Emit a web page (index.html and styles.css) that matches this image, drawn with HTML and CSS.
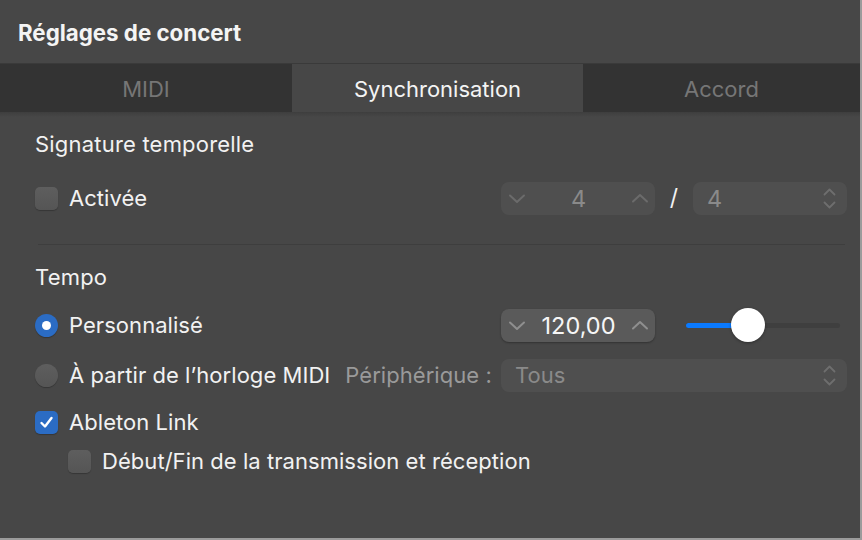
FILE: index.html
```html
<!DOCTYPE html>
<html lang="fr">
<head>
<meta charset="utf-8">
<title>Réglages de concert</title>
<link rel="stylesheet" href="styles.css">
</head>
<body>
<div class="window">
  <header class="header">
    <h1 class="title">Réglages de concert</h1>
  </header>
  <nav class="tabs">
    <div class="tab tab-midi">MIDI</div>
    <div class="tab tab-sync active">Synchronisation</div>
    <div class="tab tab-accord">Accord</div>
  </nav>
  <main class="content">
    <h2 class="section-title first">Signature temporelle</h2>
    <div class="row row-sig">
      <label class="check-label">
        <span class="checkbox"></span>
        <span class="label">Activée</span>
      </label>
      <div class="controls">
        <div class="stepper disabled">
          <svg class="chev" width="18" height="11" viewBox="0 0 18 11"><polyline points="2,2.5 9,9 16,2.5"/></svg>
          <span class="stepper-value">4</span>
          <svg class="chev" width="18" height="11" viewBox="0 0 18 11"><polyline points="2,8.5 9,2 16,8.5"/></svg>
        </div>
        <span class="slash">/</span>
        <div class="popup small disabled">
          <span class="popup-value">4</span>
          <svg class="updown" width="13" height="21" viewBox="0 0 13 21"><polyline points="1.5,6.5 6.5,1.5 11.5,6.5"/><polyline points="1.5,14.5 6.5,19.5 11.5,14.5"/></svg>
        </div>
      </div>
    </div>
    <div class="separator"></div>
    <h2 class="section-title tempo">Tempo</h2>
    <div class="row row-custom">
      <label class="check-label">
        <span class="radio on"></span>
        <span class="label">Personnalisé</span>
      </label>
      <div class="controls">
        <div class="stepper enabled">
          <svg class="chev" width="18" height="11" viewBox="0 0 18 11"><polyline points="2,2.5 9,9 16,2.5"/></svg>
          <span class="stepper-value">120,00</span>
          <svg class="chev" width="18" height="11" viewBox="0 0 18 11"><polyline points="2,8.5 9,2 16,8.5"/></svg>
        </div>
        <div class="slider">
          <div class="slider-track"><div class="slider-fill" style="width: 62px"></div></div>
          <div class="slider-thumb" style="left: 45px"></div>
        </div>
      </div>
    </div>
    <div class="row row-midi">
      <label class="check-label">
        <span class="radio"></span>
        <span class="label">À partir de l’horloge MIDI</span>
      </label>
      <span class="device-label">Périphérique :</span>
      <div class="popup wide disabled">
        <span class="popup-value">Tous</span>
        <svg class="updown" width="13" height="21" viewBox="0 0 13 21"><polyline points="1.5,6.5 6.5,1.5 11.5,6.5"/><polyline points="1.5,14.5 6.5,19.5 11.5,14.5"/></svg>
      </div>
    </div>
    <div class="row row-link">
      <label class="check-label">
        <span class="checkbox on">
          <svg width="17" height="17" viewBox="0 0 17 17"><polyline points="3.5,9 7,12.5 13.5,4"/></svg>
        </span>
        <span class="label">Ableton Link</span>
      </label>
    </div>
    <div class="row row-sub">
      <label class="check-label">
        <span class="checkbox"></span>
        <span class="label">Début/Fin de la transmission et réception</span>
      </label>
    </div>
  </main>
</div>
</body>
</html>
```

FILE: styles.css
```css
* { box-sizing: border-box; }
html, body { margin: 0; padding: 0; background: #474747; }
body {
  font-family: "Inter", "Liberation Sans", sans-serif;
  color: #f2f2f2;
  -webkit-font-smoothing: antialiased;
}
.window {
  width: 862px;
  height: 540px;
  background: #474747;
  border-right: 2px solid #9b9b9b;
  border-bottom: 2px solid #9b9b9b;
  position: relative;
  overflow: hidden;
}
.header {
  height: 64px;
  display: flex;
  align-items: center;
  padding-left: 18px;
  padding-top: 0;
}
.title {
  margin: 0;
  font-size: 22.3px;
  font-weight: 700;
  letter-spacing: 0;
  color: #f4f4f4;
}
.tabs {
  display: flex;
  height: 48px;
  background: #333333;
  box-shadow: 0 -1px 0 #3a3a3a;
}
.tab {
  display: flex;
  align-items: center;
  justify-content: center;
  font-size: 22px;
  color: #767676;
  padding-top: 1px;
}
.tab-midi { width: 292px; }
.tab-sync { width: 291px; }
.tab-accord { flex: 1; }
.tab.active { background: #474747; color: #f4f4f4; }
.content {
  padding: 20px 0 0 35px;
  background: linear-gradient(#3e3e3e, #474747 5px);
  height: 428px;
}
.section-title {
  margin: 0;
  font-size: 22px;
  font-weight: 400;
  line-height: 24px;
  letter-spacing: 0.2px;
  color: #f2f2f2;
}
.tempo { margin-top: 20px; }
.row {
  display: flex;
  align-items: center;
  height: 40px;
}
.row-sig { margin-top: 22px; }
.row-custom { margin-top: 16px; }
.row-midi { margin-top: 10px; }
.row-link { margin-top: 7px; }
.row-sub { margin-top: -1px; padding-left: 33px; }
.check-label {
  display: flex;
  align-items: center;
  gap: 11px;
}
.label { font-size: 22px; line-height: 24px; letter-spacing: 0.05px; }
.checkbox {
  width: 23px;
  height: 23px;
  border-radius: 5px;
  background: linear-gradient(#5e5e5e, #555555);
  box-shadow: 0 1px 1px rgba(0,0,0,0.25);
  display: flex;
  align-items: center;
  justify-content: center;
}
.checkbox.on { background: #2b6cc4; }
.checkbox svg polyline {
  fill: none;
  stroke: #ffffff;
  stroke-width: 2.4;
  stroke-linecap: round;
  stroke-linejoin: round;
}
.radio {
  width: 23px;
  height: 23px;
  border-radius: 50%;
  background: linear-gradient(#5e5e5e, #555555);
  box-shadow: 0 1px 1px rgba(0,0,0,0.25);
  display: flex;
  align-items: center;
  justify-content: center;
}
.radio.on { background: #2b6cc4; }
.radio.on::after {
  content: "";
  width: 9px;
  height: 9px;
  border-radius: 50%;
  background: #ffffff;
}
.controls {
  margin-left: auto;
  display: flex;
  align-items: center;
  width: 346px;
  margin-right: 13px;
}
.stepper {
  width: 154px;
  height: 33px;
  border-radius: 8px;
  display: flex;
  align-items: center;
  justify-content: space-between;
  padding: 0 6px 0 7px;
}
.stepper.disabled { background: #4f4f4f; }
.stepper.enabled {
  background: #5a5a5a;
  box-shadow: 0 1px 2px rgba(0,0,0,0.3);
}
.stepper-value { font-size: 23.5px; }
.stepper.disabled .stepper-value { color: #8a8a8a; }
.stepper.enabled .stepper-value { color: #f6f6f6; }
.chev polyline {
  fill: none;
  stroke-width: 2;
  stroke-linecap: round;
  stroke-linejoin: round;
}
.stepper.disabled .chev polyline { stroke: #6b6b6b; }
.stepper.enabled .chev polyline { stroke: #8f8f8f; }
.slash {
  font-size: 23px;
  color: #f2f2f2;
  width: 38px;
  text-align: center;
}
.popup {
  height: 33px;
  border-radius: 8px;
  background: #4f4f4f;
  display: flex;
  align-items: center;
  justify-content: space-between;
  padding: 0 11px 0 14px;
}
.popup.small { width: 154px; }
.popup.wide { width: 346px; margin-left: auto; margin-right: 13px; }
.popup-value { font-size: 22px; color: #8a8a8a; }
.popup.small .popup-value { font-size: 23.5px; }
.updown polyline {
  fill: none;
  stroke: #6e6e6e;
  stroke-width: 1.8;
  stroke-linecap: round;
  stroke-linejoin: round;
}
.device-label {
  margin-left: 15px;
  font-size: 22px;
  color: #9a9a9a;
  letter-spacing: 0.05px;
}
.slider {
  position: relative;
  margin-left: 31px;
  width: 154px;
  height: 34px;
  display: flex;
  align-items: center;
}
.slider-track {
  width: 100%;
  height: 5px;
  border-radius: 3px;
  background: #3f3f3f;
  overflow: hidden;
}
.slider-fill {
  height: 100%;
  background: #0a7aff;
}
.slider-thumb {
  position: absolute;
  top: 0;
  width: 34px;
  height: 34px;
  border-radius: 50%;
  background: #ffffff;
  box-shadow: 0 1px 3px rgba(0,0,0,0.35);
}
.separator {
  margin-top: 26px;
  margin-left: 3px;
  width: 807px;
  height: 1px;
  background: #3e3e3e;
}
```
